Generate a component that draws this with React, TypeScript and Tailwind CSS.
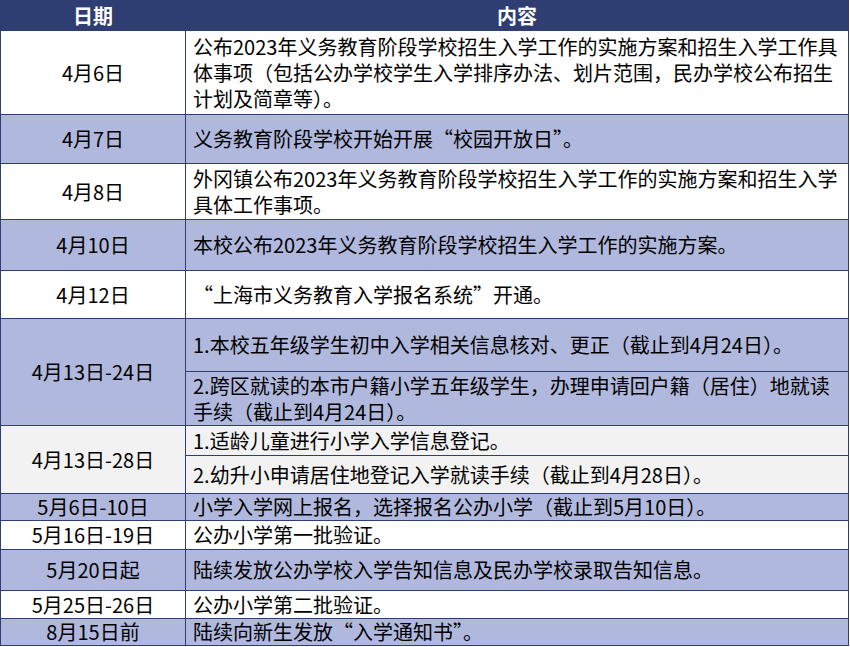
import React from 'react';

type Row = {
  date: string;
  h: number;
  bg: string;
  items: { h: number; lines: string[] }[];
};

const rows: Row[] = [
  {
    date: '4月6日',
    h: 84,
    bg: 'bg-white',
    items: [
      {
        h: 84,
        lines: [
          '公布2023年义务教育阶段学校招生入学工作的实施方案和招生入学工作具',
          '体事项（包括公办学校学生入学排序办法、划片范围，民办学校公布招生',
          '计划及简章等）。',
        ],
      },
    ],
  },
  { date: '4月7日', h: 49, bg: 'bg-[#b0b9dd]', items: [{ h: 49, lines: ['义务教育阶段学校开始开展“校园开放日”。'] }] },
  {
    date: '4月8日',
    h: 56,
    bg: 'bg-white',
    items: [
      {
        h: 56,
        lines: ['外冈镇公布2023年义务教育阶段学校招生入学工作的实施方案和招生入学', '具体工作事项。'],
      },
    ],
  },
  { date: '4月10日', h: 51, bg: 'bg-[#b0b9dd]', items: [{ h: 51, lines: ['本校公布2023年义务教育阶段学校招生入学工作的实施方案。'] }] },
  { date: '4月12日', h: 48, bg: 'bg-white', items: [{ h: 48, lines: ['“上海市义务教育入学报名系统”开通。'] }] },
  {
    date: '4月13日-24日',
    h: 107,
    bg: 'bg-[#b0b9dd]',
    items: [
      { h: 53, lines: ['1.本校五年级学生初中入学相关信息核对、更正（截止到4月24日）。'] },
      { h: 54, lines: ['2.跨区就读的本市户籍小学五年级学生，办理申请回户籍（居住）地就读', '手续（截止到4月24日）。'] },
    ],
  },
  {
    date: '4月13日-28日',
    h: 68,
    bg: 'bg-[#f2f2f2]',
    items: [
      { h: 30, lines: ['1.适龄儿童进行小学入学信息登记。'] },
      { h: 38, lines: ['2.幼升小申请居住地登记入学就读手续（截止到4月28日）。'] },
    ],
  },
  { date: '5月6日-10日', h: 26, bg: 'bg-[#b0b9dd]', items: [{ h: 26, lines: ['小学入学网上报名，选择报名公办小学（截止到5月10日）。'] }] },
  { date: '5月16日-19日', h: 29, bg: 'bg-white', items: [{ h: 29, lines: ['公办小学第一批验证。'] }] },
  { date: '5月20日起', h: 41, bg: 'bg-[#b0b9dd]', items: [{ h: 41, lines: ['陆续发放公办学校入学告知信息及民办学校录取告知信息。'] }] },
  { date: '5月25日-26日', h: 28, bg: 'bg-white', items: [{ h: 28, lines: ['公办小学第二批验证。'] }] },
  { date: '8月15日前', h: 27, bg: 'bg-[#b0b9dd]', items: [{ h: 27, lines: ['陆续向新生发放“入学通知书”。'] }] },
];

const cell = 'border border-[#2f3e72] p-0';

export default function App() {
  return (
    <div className="w-[850px] h-[647px] bg-white" style={{ fontFamily: '"Noto Sans CJK SC", "Noto Sans", sans-serif' }}>
      <table className="w-[849px] table-fixed border-collapse text-[20px] leading-[26px] text-black">
        <colgroup>
          <col className="w-[185px]" />
          <col />
        </colgroup>
        <thead>
          <tr className="h-[30px] bg-[#2f3e72] text-white">
            <th className={`${cell} font-bold`}>日期</th>
            <th className={`${cell} font-bold`}>内容</th>
          </tr>
        </thead>
        <tbody>
          {rows.map((r) =>
            r.items.map((it, i) => (
              <tr key={r.date + i} className={r.bg} style={{ height: it.h }}>
                {i === 0 && (
                  <td rowSpan={r.items.length} className={`${cell} text-center align-middle`}>
                    {r.date}
                  </td>
                )}
                <td className={`${cell} px-[7px] align-middle whitespace-nowrap`}>
                  {it.lines.map((l, j) => (
                    <div key={j}>{l}</div>
                  ))}
                </td>
              </tr>
            ))
          )}
        </tbody>
      </table>
    </div>
  );
}
